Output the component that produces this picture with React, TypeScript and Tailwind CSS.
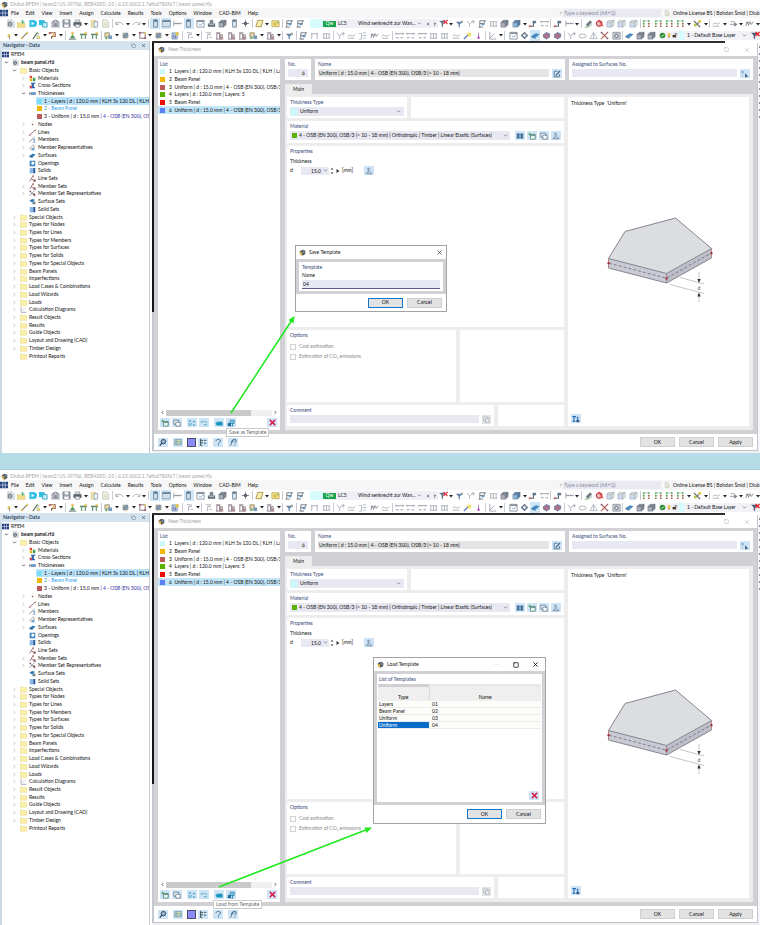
import type { ReactNode } from 'react';
import { ChevronDown, ChevronLeft, ChevronRight, Minus, Square, X } from 'lucide-react';

const G = '#6b7280';
const D = '#3d4653';
const B = '#3f7fb5';
const Y = '#e2b93b';

// 10x10 glyphs shared by the toolbars, the tree and the dialog buttons
const glyphs: Record<string, ReactNode> = {
  app: (
    <>
      <path d="M1 3.5 4.5 1 9 2.5 9 7 5 9.5 1.5 7z" fill="#4b5563" />
      <path d="M1 3.5 4.5 5 5 9.5 1.5 7z" fill="#d9b23c" />
      <path d="M5 3 8 3.6 7.6 6 5.4 5.4z" fill="#7f93ad" />
    </>
  ),
  logo: (
    <>
      <path d="M0 1h10v8H0z" fill="#23407c" />
      <path d="M0 5h10M3.4 1v8M6.5 1v8" stroke="#dfe8f5" strokeWidth=".8" />
    </>
  ),
  newDoc: (
    <>
      <path d="M2 1h5l2 2v6H2z" fill="#eef1f4" stroke="#9ca3af" strokeWidth=".7" />
      <circle cx="4.6" cy="5.5" r="2.3" fill="none" stroke={D} strokeWidth="1" />
      <path d="M2.3 5.5h4.6M4.6 3.3v4.5" stroke={D} strokeWidth=".6" />
    </>
  ),
  open: (
    <>
      <path d="M0 4h3l1 1h5v4.5H0z" fill="#f3d978" stroke="#d3b44b" strokeWidth=".5" />
      <path d="M5 4V1h2v2h2L6 5.5z" fill="#41b06a" />
    </>
  ),
  cyanD: (
    <>
      <path d="M1.5 1H6a4 4 0 0 1 0 8H1.5z" fill="#14b4e0" />
      <path d="m4 3 3 2-3 2z" fill="#fff" />
    </>
  ),
  cyanDoc: (
    <>
      <path d="M0 1h4a3 3 0 0 1 0 6H0z" fill="#14b4e0" />
      <path d="M4 4h5v5H4z" fill="#bfeaf7" stroke="#159bc2" strokeWidth="1" />
    </>
  ),
  box: (
    <>
      <path d="M1 3h8v6H1z" fill="#b7bcc4" stroke={G} strokeWidth=".7" />
      <path d="m2 3 3-2 3 2M3 5.5h4M3 7.2h4" stroke={D} strokeWidth=".9" fill="none" />
    </>
  ),
  save: (
    <>
      <path d="M1 1h8v8H1z" fill="#8b929c" stroke={D} strokeWidth=".6" />
      <path d="M3 1h4v3H3zM2.5 6h5v3h-5z" fill="#f3f4f6" />
    </>
  ),
  print: (
    <>
      <path d="M2.5 1h5v3h-5z" fill="#d7dade" stroke={D} strokeWidth=".5" />
      <path d="M.5 3.6h9v4h-9z" fill={D} />
      <path d="M2.5 6h5v3.2h-5z" fill="#e5e7eb" stroke={D} strokeWidth=".5" />
    </>
  ),
  report: (
    <>
      <path d="M1.5 1.5h5v7.5h-5z" fill="#dfe6c2" stroke={Y} strokeWidth=".8" />
      <path d="M4.5 3h4v6h-4z" fill="#f3f4f6" stroke="#5c7da3" strokeWidth=".8" />
    </>
  ),
  page: (
    <>
      <path d="M2 1h4.5L8.5 3v6H2z" fill="#f7f8f5" stroke="#a5ab9b" strokeWidth=".8" />
      <path d="M3.5 4.4h3.5M3.5 6.4h3.5" stroke="#9cc57a" strokeWidth=".9" />
    </>
  ),
  undo: <path d="M1 3v3h3M1.3 5.6C4 2.6 7 3 9 6.8" fill="none" stroke="#8d939c" strokeWidth="1" />,
  redo: <path d="M9 3v3H6M8.7 5.6C6 2.6 3 3 1 6.8" fill="none" stroke="#a0a5ad" strokeWidth="1" />,
  panel: (
    <>
      <path d="M3 1h4v8H3z" fill="#dbe7f1" stroke="#4a6179" strokeWidth=".9" />
      <path d="M3 1h4v2H3z" fill="#4a6179" />
    </>
  ),
  table: (
    <>
      <path d="M.8 1.5h8.4v7H.8z" fill="#eef4f9" stroke="#5b7894" strokeWidth=".8" />
      <path d="M.8 2.5h8.4" stroke="#4a6179" strokeWidth="1.6" />
      <path d="M1 5.6h8M4 3v5.4M6.6 3v5.4" stroke="#9db2c5" strokeWidth=".5" />
    </>
  ),
  dim: <path d="M1 2v6M1 5h8M9 4v2M3.5 4v2M6 4v2" stroke={G} strokeWidth=".8" fill="none" />,
  window: (
    <>
      <path d="M1 1.5h8v7.5H1z" fill="#fff" stroke={G} strokeWidth=".9" />
      <path d="M1 2.5h8" stroke={G} strokeWidth="1.5" />
      <path d="m3 5 2 2 3-3" stroke={B} strokeWidth=".9" fill="none" />
    </>
  ),
  stamp: (
    <>
      <path d="M3 1h4v4H3z" fill="#6b7480" />
      <path d="M1 5h8v3.6H1z" fill={D} />
      <path d="M2 6.3h6" stroke="#e5e7eb" strokeWidth=".8" />
    </>
  ),
  cube: (
    <>
      <path d="M1 4h5v5H1z" fill="#9aa2ad" stroke={D} strokeWidth=".5" />
      <path d="m1 4 2.5-2.6H9L6 4zM6 4l3-2.6V6.5L6 9z" fill="#6d7783" stroke={D} strokeWidth=".5" />
    </>
  ),
  blueCube: (
    <>
      <path d="M1 4h5v5H1z" fill="#7ba7d6" stroke="#33597f" strokeWidth=".5" />
      <path d="m1 4 2.5-2.6H9L6 4zM6 4l3-2.6V6.5L6 9z" fill="#3d6996" stroke="#33597f" strokeWidth=".5" />
    </>
  ),
  paleCube: (
    <>
      <path d="M1 3.5h5.5V9H1z" fill="#c5d3ea" stroke="#8592ad" strokeWidth=".6" />
      <path d="m1 3.5 2-2h6l-2.5 2zM6.5 3.5 9 1.5V7L6.5 9z" fill="#e3e6d5" stroke="#8592ad" strokeWidth=".6" />
    </>
  ),
  move: (
    <>
      <path d="M5 1v8M1 5h8" stroke={G} strokeWidth="1" />
      <circle cx="5" cy="5" r="2" fill={D} />
    </>
  ),
  slab: <path d="M3 1.5h6L7 8.5H1z" fill="#f6e7a5" stroke="#a08529" strokeWidth="1" />,
  yellowBox: (
    <>
      <path d="M1 2h8v6.5H1z" fill="#f6e27c" stroke="#a08529" strokeWidth=".8" />
      <path d="M3 4h3v3H3z" fill="#d5a41c" />
      <circle cx="7.5" cy="4" r="1" fill="#69a558" />
    </>
  ),
  crane: (
    <>
      <path d="M2 9V2h7M2 5h5V2M.5 9h5" stroke="#56606c" strokeWidth="1" fill="none" />
      <path d="M4 5h3v2H4z" fill={B} />
    </>
  ),
  redFilter: (
    <>
      <path d="M0 2h7L4.5 5v4.5L3 8V5z" fill="#46627f" />
      <path d="m5 1 4.5 4.5M9.5 1 5 5.5" stroke="#e11d24" strokeWidth="1.5" />
    </>
  ),
  filter: (
    <>
      <path d="M1 3h7L5.4 6v3.5L4 8.5V6z" fill="#4b6c92" />
      <path d="M7 1.5 9 3 7.5 5z" fill="#4b5563" />
    </>
  ),
  fork: <path d="M1 2l3 4 3-4M4 6v3M8 1v4M7 3h3" stroke="#9299a4" strokeWidth=".9" fill="none" />,
  truss: <path d="M1 3h8M1 8h8M2 3v5M5 3v5M8 3v5" stroke="#9299a4" strokeWidth=".9" fill="none" />,
  beams: <path d="M1 3h8M1 7.5h3M6 7.5h3M1 2v2M9 2v2" stroke="#7f8792" strokeWidth="1" fill="none" />,
  steps: (
    <>
      <path d="M1 8h5V4h3" stroke={D} strokeWidth="1.2" fill="none" />
      <path d="M5 2h4v2.5H5z" fill="#4a6179" />
      <circle cx="2" cy="8" r="1.1" fill="#c43b31" />
    </>
  ),
  redCircle: (
    <>
      <path d="M1 4 5 2l4 2-3 5H3z" fill="#e1b6b6" />
      <circle cx="4.5" cy="5" r="3" fill="none" stroke="#d01f26" strokeWidth="1.3" />
      <path d="M4 1l5 7" stroke="#d01f26" strokeWidth="1.2" />
    </>
  ),
  rotate: (
    <>
      <path d="M2 6 7 1.5 9 4 4 8.5z" fill="#5d6874" />
      <path d="M1 9c3 .5 6-1 7.5-3" stroke="#56a04d" strokeWidth="1" fill="none" />
    </>
  ),
  dots: (
    <>
      <path d="M2 2v6M7.5 3v5M2 2h5" stroke="#6e9d63" strokeWidth=".6" fill="none" />
      <path d="M1 1.5h2v1.6H1zM6.5 1.5h2v1.6h-2zM1 4.5h2V6H1z" fill="#2f9e44" />
      <path d="M6.5 4.5h2V6h-2zM1 7.5h2V9H1zM6.5 7.5h2V9h-2z" fill="#b04a2f" />
    </>
  ),
  greenYellow: (
    <>
      <path d="m1 2 7 7M8 2 2 8" stroke={D} strokeWidth="1.2" />
      <path d="M1 5h3v3H1z" fill="#a9c52f" />
      <path d="M6 1h3v3H6z" fill={Y} />
    </>
  ),
  curve: <path d="M1 6c2-4 4 2 8-2M1 8h7" stroke="#8f96a1" strokeWidth=".9" fill="none" />,
  arrows: <path d="M1 6h6M6 4l3 2-3 2zM2 3h4" stroke="#687280" strokeWidth=".8" fill="#687280" />,
  hist: <path d="M1 8l1.5-5L4 7l1.5-4L7 6l2-3M1 4h3" stroke="#5b6470" strokeWidth=".9" fill="none" />,
  node: (
    <>
      <circle cx="5.5" cy="5" r="1.7" fill={Y} />
      <path d="M6 6v3" stroke={D} strokeWidth=".8" />
    </>
  ),
  yellowLine: (
    <>
      <path d="M1.5 8.5 8.5 1.5" stroke="#6b6b4a" strokeWidth="1.3" />
      <circle cx="2" cy="8" r="1.2" fill={Y} />
      <circle cx="8" cy="2" r="1.2" fill={Y} />
    </>
  ),
  members: (
    <>
      <path d="M1 9 6 1.5" stroke="#4d5a44" strokeWidth="1.3" />
      <path d="M5 3h3M5 5.5h3M5 8h4" stroke="#76975a" strokeWidth="1" />
      <circle cx="8" cy="7.5" r="1.3" fill={Y} />
    </>
  ),
  flag: (
    <>
      <path d="M1 2h7v4H4v3" stroke="#7a4545" strokeWidth="1.2" fill="none" />
      <path d="m5 1 3 3-2 3z" fill={Y} />
      <circle cx="2" cy="2.5" r="1.2" fill="#c43b31" />
    </>
  ),
  support: (
    <>
      <circle cx="5" cy="2.5" r="1.6" fill={Y} />
      <path d="M5 3.5 8 8H2z" fill="#3a8d4c" />
      <path d="M1 9h8" stroke={D} strokeWidth="1" />
    </>
  ),
  green2: (
    <>
      <path d="M1 3h8v1.6H1z" fill="#38784a" />
      <path d="M3 4v5M7 4v5" stroke="#38784a" strokeWidth="1.2" />
      <circle cx="7.5" cy="2.5" r="1.3" fill={Y} />
    </>
  ),
  loadBox: (
    <>
      <path d="M1 2h5v5H1z" fill="#d6cfa0" stroke="#776c3a" strokeWidth=".8" />
      <path d="M5 5h4v4H5z" fill="#5f89b2" />
      <circle cx="2.5" cy="8" r="1.2" fill="#3f9c50" />
    </>
  ),
  frame: (
    <>
      <path d="M2 2h6v6H2z" fill="none" stroke="#6b4b57" strokeWidth="1" />
      <path d="M1 1h2v2H1zM7 7h2v2H7z" fill="#8c3d4c" />
      <circle cx="8" cy="2" r="1.2" fill={Y} />
    </>
  ),
  profile: (
    <>
      <path d="M2 2h6v6H2z" fill="#5f7fa8" />
      <path d="M1 6 6 1.5M4 9l5-4" stroke="#c9a53a" strokeWidth="1" />
    </>
  ),
  gear: (
    <>
      <path d="M1 2h6v7H1z" fill="#a9bdd6" stroke="#53779e" strokeWidth=".7" />
      <circle cx="7" cy="3" r="2" fill={Y} />
      <path d="M3 4v4M5 5v3" stroke="#2d5580" strokeWidth=".8" />
    </>
  ),
  hook: <path d="M2 2h5v2H4v5M6 7h3" stroke="#98a0aa" strokeWidth="1" fill="none" />,
  bars: (
    <>
      <path d="M1 9h8M2 9V3h3v6M6 9V4h2v5M1 2h5" stroke="#7a6a78" strokeWidth="1" fill="none" />
      <path d="M6 6h3v3H6z" fill="#ad7b80" />
    </>
  ),
  gray: <path d="M1 3h3v6H1M5 2h4M5 5h4M6 8h3" stroke="#979ea8" strokeWidth=".9" fill="none" />,
  portal: <path d="M2 9V3h6v6M.8 3h2M7 3h2" stroke="#98a0aa" strokeWidth="1" fill="none" />,
  target: (
    <>
      <path d="M5 .8 9.2 5 5 9.2.8 5z" fill="#51617a" />
      <circle cx="5" cy="5" r="1.6" fill="#e5e7eb" />
    </>
  ),
  surf: (
    <>
      <path d="m.5 5.5 5-3 4 1-4.5 4z" fill="#2b78b8" />
      <path d="m.5 5.5 4.5 2v1.2L.5 7z" fill="#1c4f7c" />
    </>
  ),
  magenta: (
    <>
      <path d="m1 4 4-3 4 2v4L5 9.5 1 7z" fill="#6d6d93" />
      <path d="M3 4h4v3H3z" fill="#c24b64" />
    </>
  ),
  wand: (
    <>
      <path d="M1 9 6 4" stroke="#4f6db4" strokeWidth="1.6" />
      <path d="M4 2h5v4H6z" fill="#f2dc54" />
    </>
  ),
  pin: (
    <>
      <path d="M5 2v5" stroke="#a06aa8" strokeWidth="1" />
      <circle cx="5" cy="7.5" r="1.4" fill="#b02bc4" />
    </>
  ),
  axes: <path d="M2 1v8h7M2 8l5-5" stroke="#7f8792" strokeWidth=".9" fill="none" />,
  ellipse: <ellipse cx="5" cy="5.5" rx="4" ry="2.2" fill="none" stroke="#9aa2ad" strokeWidth="1" />,
  tri: <path d="M5 1.5 9 8.5H1zM5 2v6" fill="none" stroke="#9aa2ad" strokeWidth=".9" />,
  redX: (
    <>
      <path d="m1 1 8 8M9 1 1 9" stroke="#a4403d" strokeWidth="1.3" />
      <path d="M1 1h1.5v1.5H1zM7.5 7.5H9V9H7.5z" fill={D} />
    </>
  ),
  camera: (
    <>
      <path d="M1 1.5h8v7.5H1z" fill="#d5d8dd" stroke={G} strokeWidth=".9" />
      <circle cx="5" cy="5.3" r="2" fill="none" stroke={D} strokeWidth="1" />
    </>
  ),
  check: (
    <>
      <circle cx="5" cy="5" r="4" fill="#2c8f36" />
      <path d="m3 5 1.5 1.5L7.200 3.5" stroke="#fff" strokeWidth="1" fill="none" />
    </>
  ),
  bulb: (
    <>
      <circle cx="5" cy="4" r="2.5" fill="#f1c232" />
      <path d="M4 6.5h2V9H4z" fill="#7c5d12" />
    </>
  ),
  lock: (
    <>
      <path d="M1 5h6v4H1z" fill="#4b3a2a" />
      <path d="M5 5V2.5h3V5" fill="none" stroke={D} strokeWidth="1" />
    </>
  ),
  folder: <path d="M.5 1.5H4l.8 1h4.7V9H.5z" fill="#fbf0a8" stroke="#e2ce6c" strokeWidth=".6" />,
  material: (
    <>
      <path d="M1 1h3.5v3.5H1z" fill="#e24b3b" />
      <path d="M1 5h3.5v4H1z" fill="#f0b429" />
      <path d="M5.500 4H9v5H5.500z" fill="#3e9e57" />
    </>
  ),
  section: (
    <>
      <path d="M3 1h6v1.800H7V7h1.500v2H2.500V7H4V2.800H3z" fill="#3663b0" />
      <path d="M1 5h3v4H1z" fill="#c7494d" />
    </>
  ),
  thick: (
    <>
      <path d="M1 3v4M1 5h2" stroke={D} strokeWidth=".8" />
      <path d="M3 3.5h6.5v3.2H3z" fill="#62a0cf" stroke="#36638a" strokeWidth=".5" />
    </>
  ),
  nodeDot: <circle cx="5" cy="5" r="1.1" fill="#8b4040" />,
  line: (
    <>
      <path d="M1 8.5 9 1.5" stroke="#7a4a4a" strokeWidth="1" />
      <path d="M.5 8H2v1.5H.5zM8.200 1h1.500v1.500H8.200z" fill="#a83232" />
    </>
  ),
  member: (
    <>
      <path d="M.5 8.5 8 1.5" stroke="#63707f" strokeWidth="1.1" />
      <path d="M6 5h3M7.5 5v4M6 9h3" stroke="#3d77b5" strokeWidth=".9" />
    </>
  ),
  memberRep: (
    <>
      <path d="M.5 7 7 1M2.5 9 9 3" stroke="#63707f" strokeWidth="1" />
      <path d="M4 6h4v3H4z" fill="#6da2d6" />
    </>
  ),
  opening: (
    <>
      <path d="M1 1h8v8H1z" fill="#3f80bf" />
      <path d="M3.5 2.5h4v4h-4z" fill="#fff" />
    </>
  ),
  solid: (
    <>
      <path d="M1 1.5h5V9H1z" fill="#8bb8e4" />
      <path d="M6 1.5h3V9H6z" fill="#2a5fa3" />
    </>
  ),
  lineSet: (
    <>
      <path d="M1 9 6 1M3 5l6 4" stroke="#7a4a4a" strokeWidth="1" fill="none" />
      <circle cx="6" cy="1.5" r="1" fill="#a83232" />
      <path d="M6.5 6.5h3v3h-3z" fill="#8b4a54" />
    </>
  ),
  crossSet: (
    <>
      <path d="M1 2l8 7M1 8l7-7" stroke="#5d6874" strokeWidth="1" fill="none" />
      <path d="M6 5h3v3H6zM1 1h2v2H1z" fill="#8b4a54" />
    </>
  ),
  surfSet: (
    <>
      <path d="m.5 4 4-2.5 4 1-4 4z" fill="#2b78b8" />
      <path d="M5 5h4v4H5z" fill="#6a7f96" />
    </>
  ),
  calc: <path d="M1.5 1v8H9M4 5h1M6.5 4h1" stroke="#6b7280" strokeWidth=".8" fill="none" />,
  book: (
    <>
      <path d="M1 2h3.5v6H1zM5.500 2H9v6H5.500z" fill="#35658f" />
      <path d="M1.5 5H4M6 5h2.5" stroke="#fff" strokeWidth=".5" />
    </>
  ),
  newItem: (
    <>
      <path d="M3 3h6v6H3z" fill="#e9f3f1" stroke="#41756a" strokeWidth=".9" />
      <path d="M3 4h6" stroke="#41756a" strokeWidth="1.2" />
      <path d="M.5 2.5h3M2 1v3" stroke="#3d9c4d" strokeWidth="1" />
    </>
  ),
  copyItem: (
    <>
      <path d="M1 1.5h6v5H1z" fill="#fff" stroke="#4d6780" strokeWidth=".9" />
      <path d="M3.5 4H9v5H3.500z" fill="#fff" stroke="#4d6780" strokeWidth=".9" />
    </>
  ),
  tree: (
    <>
      <path d="M4 1.5v7M4 5h3M4 8.5h3.5" stroke="#60768c" strokeWidth=".8" fill="none" />
      <path d="M3 .8h3v2.500H3zM1 6.500h2.500V9H1zM6.500 6.500H9V9H6.500z" fill="#8aa2b8" />
    </>
  ),
  edit: (
    <>
      <path d="M1.5 1.5H6M1.5 1.5v7H8V5" stroke="#35587a" strokeWidth=".9" fill="none" />
      <path d="M3.5 7 8.8 1.2" stroke="#35587a" strokeWidth="1.3" />
    </>
  ),
  pick: (
    <>
      <path d="m5 4 4 4.5H6.800L5.500 10z" fill="#2d4a6a" />
      <path d="M1 1.5h2v2H1z" fill="#4e7ba7" />
      <path d="M2 4.5V8" stroke="#8aa4be" strokeWidth=".7" />
    </>
  ),
  checks: <path d="M1 2.5h3M1 7.5h3M6 3.5h3M6 7.5h3M4 5.5l1 1M1 4.5l1 1" stroke="#2c93ae" strokeWidth="1.3" fill="none" />,
  checks2: <path d="M.5 3 2 4.500 4 2M5 4l1.500-1.500L9 5M4.500 8 6 6.500 9 8" stroke="#3fa0a8" strokeWidth="1.1" fill="none" />,
  load: <path d="M.5 5.5 4 2.500v1.500c2-1.500 4.500-1.200 5.500.500V8H2.500z" fill="#1795bd" />,
  saveTpl: (
    <>
      <path d="M1 5h4v4H1z" fill="#1d6fa3" />
      <path d="M4 1.5h5v4H4z" fill="#7cc6e0" stroke="#1d6fa3" strokeWidth=".8" />
      <path d="M7 5.5V9H5.5" stroke="#1d6fa3" strokeWidth="1" fill="none" />
    </>
  ),
  search: (
    <>
      <circle cx="5.5" cy="4.5" r="2.8" fill="#9ab7cf" stroke="#27445f" strokeWidth="1.2" />
      <path d="M3.5 6.5 1 9.5" stroke="#27445f" strokeWidth="1.5" />
    </>
  ),
  units: (
    <>
      <path d="M1 2h8v6.5H1z" fill="#d8e4b8" stroke="#5a86a8" strokeWidth=".8" />
      <path d="M1 4.5h8M1 6.5h8M3.5 2v6.5" stroke="#5a86a8" strokeWidth=".6" />
    </>
  ),
  branch: <path d="M2 1v8M2 3h3M2 6h3M6 3h3M6 6.5h3M1 9h3" stroke="#2f4a4a" strokeWidth="1.1" fill="none" />,
  help: <path d="M2.5 4C2.500 1 8 1 8 4c0 1.500-2.500 1.500-2.500 3M5.500 8v1.300" stroke="#3c6a8e" strokeWidth="1.2" fill="none" />,
  fx: <path d="M1.5 9C4 9 3 1.500 6 1.500M2.500 4.500h3M6 3.500C6 1 9.500 1 9 3.500 8.500 5 7.500 5 7.500 6.500M7.500 8v1.200" stroke="#24506f" strokeWidth="1" fill="none" />,
  views: (
    <>
      <path d="M.5 2H5M2.5 2v6M1 8h3" stroke="#2a6db0" strokeWidth="1.4" fill="none" />
      <path d="M7 2v6M5.5 3.5h3" stroke="#2a6db0" strokeWidth="1" />
      <path d="M5.5 6H9v3H5.500z" fill="#24568c" />
    </>
  ),
};

function Glyph({ name, className = 'size-[9px]' }: { name: string; className?: string }) {
  return (
    <svg viewBox="0 0 10 10" className={`${className} shrink-0`} aria-hidden="true">
      {glyphs[name]}
    </svg>
  );
}

// "|" separator, "v" menu arrow, "*name" pressed button
const bar1a = 'newDoc open cyanD cyanDoc box save print v report page | undo v redo v | *panel *table dim *panel window stamp cube panel move | slab v yellowBox | crane crane'.split(' ');
const bar1b = 'redFilter v filter fork crane truss cube blueCube v steps beams | steps dim v | rotate redCircle paleCube paleCube paleCube | dots dots dots dots v greenYellow v | curve v arrows v hist v'.split(' ');
const bar2a = 'node v yellowLine members v flag v | support green2 green2 | loadBox v profile v frame v profile v gear | hook v | hook bars bars bars loadBox v bars v | filter | crane portal truss | fork curve gray hist curve | beams beams beams truss truss curve wand pin | axes v |'.split(' ');
const bar2b = 'window target *surf magenta magenta | fork ellipse tri redX camera | surf cube cube'.split(' ');

function ToolbarItems({ items }: { items: string[] }) {
  return (
    <>
      {items.map((item, index) => {
        if (item === '|') return <span key={index} className="h-[9px] w-px bg-[#c9ccd2]" />;
        if (item === 'v')
          return (
            <svg key={index} viewBox="0 0 4 4" className="size-[4px]" aria-hidden="true">
              <path d="M0 1h4L2 3.5z" fill="#222" />
            </svg>
          );
        const pressed = item.startsWith('*');
        const name = pressed ? item.slice(1) : item;
        return (
          <button
            key={index}
            type="button"
            aria-label={name}
            className={`flex h-[11px] w-[10px] items-center justify-center ${pressed ? 'bg-[#cfe6f7]' : ''}`}
          >
            <Glyph name={name} className="size-[9px] opacity-85" />
          </button>
        );
      })}
    </>
  );
}

const menus = ['File', 'Edit', 'View', 'Insert', 'Assign', 'Calculate', 'Results', 'Tools', 'Options', 'Window', 'CAD-BIM', 'Help'];

function WindowHeader() {
  return (
    <header className="bg-[#f6f6f7]">
      <div className="flex h-[8px] items-center gap-[2px] bg-white px-px text-[#a9a3a3]">
        <Glyph name="app" className="size-[7px]" />
        Dlubal RFEM | team2/US-29706_REBASED_02 | 6.13.0002.1.7ef6d780f67 | beam panel.rf6
      </div>
      <div className="flex h-[10px] items-center">
        <Glyph name="logo" className="size-[8px]" />
        <nav className="flex flex-1 gap-[7px] pl-[3px]">
          {menus.map((menu) => (
            <button key={menu} type="button">
              {menu}
            </button>
          ))}
        </nav>
        <ChevronRight className="size-[4px]" />
        <input
          aria-label="Keyword search"
          placeholder="Type a keyword (Alt+Q)"
          className="mr-[3px] h-[8px] w-[98px] bg-[#e9e9f3] px-px placeholder:text-[#8b8b98]"
        />
        <Glyph name="page" className="size-[6px]" />
        <span className="ml-[3px] w-[87px] overflow-hidden">Online License BS | Bohdan Šmíd | Dlub</span>
      </div>
      <div className="flex h-[11px] items-center bg-white">
        <div className="flex w-[306px] items-center justify-between pl-[5px]">
          <ToolbarItems items={bar1a} />
        </div>
        <div className="ml-[4px] flex h-[9px] w-[128px] items-center bg-[#efeff5]">
          <span className="h-full w-[13px] bg-[#d5fbfd]" />
          <span className="flex h-[6px] w-[13px] items-center justify-center bg-[#17a34a] text-white">Qw</span>
          <span className="w-[22px] pl-[2px]">LC5</span>
          <span className="flex-1">Wind senkrecht zur Wan...</span>
          <ChevronDown className="size-[5px]" />
          <ChevronLeft className="ml-[4px] size-[4px]" strokeWidth={5} />
          <ChevronRight className="mr-px ml-[3px] size-[4px]" strokeWidth={5} />
        </div>
        <div className="flex flex-1 items-center justify-between">
          <ToolbarItems items={bar1b} />
        </div>
      </div>
      <div className="flex h-[12px] items-center bg-white">
        <div className="flex w-[506px] items-center justify-between pl-[3px]">
          <ToolbarItems items={bar2a} />
        </div>
        <div className="flex flex-1 items-center justify-between pl-[2px]">
          <ToolbarItems items={bar2b} />
        </div>
        <div className="ml-[2px] flex h-[9px] w-[101px] items-center bg-[#f3f3f7]">
          <Glyph name="check" className="size-[7px]" />
          <Glyph name="bulb" className="size-[6px]" />
          <Glyph name="lock" className="size-[6px]" />
          <span className="mr-[3px] ml-px h-full w-[5px] bg-[#d5fbfd]" />
          <span className="flex-1">1 - Default Base Layer</span>
          <ChevronDown className="mr-[4px] size-[5px]" />
          <Glyph name="redFilter" />
        </div>
      </div>
    </header>
  );
}

type Row = { label: ReactNode; icon?: string; swatch?: string; level: number; open?: boolean; leaf?: boolean; className?: string };

const tree: Row[] = [
  { label: 'RFEM', icon: 'logo', level: 0, leaf: true },
  { label: 'beam panel.rf6', icon: 'newDoc', level: 1, open: true, className: 'font-bold' },
  { label: 'Basic Objects', icon: 'folder', level: 2, open: true },
  { label: 'Materials', icon: 'material', level: 3 },
  { label: 'Cross-Sections', icon: 'section', level: 3 },
  { label: 'Thicknesses', icon: 'thick', level: 3, open: true },
  { label: '1 - Layers | d : 120.0 mm | KLH 5s 120 DL | KLH | La', swatch: 'bg-[#7fdcf7]', level: 4, leaf: true, className: 'bg-[#b9e2fb]' },
  { label: '2 - Beam Panel', swatch: 'bg-[#f2b705]', level: 4, leaf: true, className: 'text-[#2b9af3]' },
  {
    label: (
      <>
        3 - Uniform | d : 15.0 mm <span className="text-[#32329b]">| 4 - OSB (EN 300), OSB,</span>
      </>
    ),
    swatch: 'bg-[#b95b5b]',
    level: 4,
    leaf: true,
  },
  { label: 'Nodes', icon: 'nodeDot', level: 3 },
  { label: 'Lines', icon: 'line', level: 3 },
  { label: 'Members', icon: 'member', level: 3 },
  { label: 'Member Representatives', icon: 'memberRep', level: 3 },
  { label: 'Surfaces', icon: 'surf', level: 3 },
  { label: 'Openings', icon: 'opening', level: 3, leaf: true },
  { label: 'Solids', icon: 'solid', level: 3, leaf: true },
  { label: 'Line Sets', icon: 'lineSet', level: 3, leaf: true },
  { label: 'Member Sets', icon: 'lineSet', level: 3 },
  { label: 'Member Set Representatives', icon: 'crossSet', level: 3 },
  { label: 'Surface Sets', icon: 'surfSet', level: 3, leaf: true },
  { label: 'Solid Sets', icon: 'solid', level: 3, leaf: true },
  { label: 'Special Objects', icon: 'folder', level: 2 },
  { label: 'Types for Nodes', icon: 'folder', level: 2 },
  { label: 'Types for Lines', icon: 'folder', level: 2 },
  { label: 'Types for Members', icon: 'folder', level: 2 },
  { label: 'Types for Surfaces', icon: 'folder', level: 2 },
  { label: 'Types for Solids', icon: 'folder', level: 2 },
  { label: 'Types for Special Objects', icon: 'folder', level: 2 },
  { label: 'Beam Panels', icon: 'folder', level: 2 },
  { label: 'Imperfections', icon: 'folder', level: 2 },
  { label: 'Load Cases & Combinations', icon: 'folder', level: 2 },
  { label: 'Load Wizards', icon: 'folder', level: 2 },
  { label: 'Loads', icon: 'folder', level: 2 },
  { label: 'Calculation Diagrams', icon: 'calc', level: 2 },
  { label: 'Result Objects', icon: 'folder', level: 2 },
  { label: 'Results', icon: 'folder', level: 2 },
  { label: 'Guide Objects', icon: 'folder', level: 2 },
  { label: 'Layout and Drawing (CAD)', icon: 'folder', level: 2 },
  { label: 'Timber Design', icon: 'folder', level: 2 },
  { label: 'Printout Reports', icon: 'folder', level: 2, leaf: true },
];

const indents = ['ml-0', 'ml-[2px]', 'ml-[10px]', 'ml-[19px]', 'ml-[34px]'];

function Navigator() {
  return (
    <aside className="flex w-[150px] shrink-0 flex-col border-r border-[#c5c9d3] bg-white">
      <div className="flex h-[9px] items-center bg-[#d5e3ef] px-[3px] font-bold text-[#33475f]">
        <span className="flex-1">Navigator - Data</span>
        <Glyph name="copyItem" className="mr-[5px] size-[5px]" />
        <X className="size-[5px]" strokeWidth={3} />
      </div>
      <div className="flex-1 border-l-2 border-[#cbd9e0] pt-px">
        <ul className="grid h-[309px] auto-rows-fr overflow-hidden">
          {tree.map((row, index) => (
            <li
              key={index}
              className={`${indents[row.level]} ${row.className ?? ''} flex min-h-0 min-w-0 items-center`}
            >
              {!row.leaf &&
                (row.open ? (
                  <ChevronDown className="size-[5px] shrink-0" strokeWidth={3} />
                ) : (
                  <ChevronRight className="size-[5px] shrink-0 text-[#777]" />
                ))}
              {row.swatch ? (
                <span className={`ml-px size-[5px] shrink-0 ${row.swatch}`} />
              ) : (
                <Glyph
                  name={row.icon ?? 'folder'}
                  className={row.level === 0 ? 'size-[7px]' : row.leaf ? 'ml-[8px] size-[7px]' : 'ml-[3px] size-[7px]'}
                />
              )}
              <span className="ml-[2px] whitespace-pre">{row.label}</span>
            </li>
          ))}
        </ul>
      </div>
    </aside>
  );
}

function IconButton({ name, label, className = '' }: { name: string; label: string; className?: string }) {
  return (
    <button
      type="button"
      aria-label={label}
      className={`flex h-[9px] w-[10px] shrink-0 items-center justify-center bg-[#cfe5f7] ${className}`}
    >
      {name === 'delete' ? (
        <X className="size-[9px] text-[#d6103c]" strokeWidth={4} />
      ) : (
        <Glyph name={name} className="size-[8px]" />
      )}
    </button>
  );
}

function Button({ children, primary }: { children: string; primary?: boolean }) {
  return (
    <button
      type="button"
      className={`flex h-[10px] w-[35px] items-center justify-center bg-[#e2e2e2] ${
        primary ? 'border border-[#1177cc]' : 'border border-[#cfcfcf]'
      }`}
    >
      {children}
    </button>
  );
}

function Box({ title, children, className = '' }: { title?: string; children?: ReactNode; className?: string }) {
  return (
    <section className={`bg-white px-[3px] pt-px ${className}`}>
      {title && <h3 className="h-[9px] leading-[8px] font-medium text-[#46567f]">{title}</h3>}
      {children}
    </section>
  );
}

const thicknesses = [
  { color: 'bg-[#c9f9fd]', label: '1  Layers | d : 120.0 mm | KLH 5s 120 DL | KLH | Layer' },
  { color: 'bg-[#f2b705]', label: '2  Beam Panel' },
  { color: 'bg-[#b95b5b]', label: '3  Uniform | d : 15.0 mm | 4 - OSB (EN 300), OSB/3 (' },
  { color: 'bg-[#5cb000]', label: '4  Layers | d : 120.0 mm | Layers: 5' },
  { color: 'bg-[#f00a0a]', label: '5  Beam Panel' },
  { color: 'bg-[#5b7ff5]', label: '6  Uniform | d : 15.0 mm | 4 - OSB (EN 300), OSB/3 (' },
];

function ThicknessList() {
  return (
    <section className="flex w-[122px] shrink-0 flex-col bg-white">
      <h3 className="mt-px h-[8px] pl-[2px] leading-[8px] font-medium text-[#46567f]">List</h3>
      <ul className="grid h-[46px] auto-rows-fr overflow-hidden">
        {thicknesses.map((item, index) => (
          <li
            key={item.label}
            className={`flex min-h-0 min-w-0 items-center gap-[4px] pl-[2px] ${index === 5 ? 'bg-[#c3e5f9]' : ''}`}
          >
            <span className={`size-[5px] shrink-0 ${item.color}`} />
            <span className="whitespace-pre">{item.label}</span>
          </li>
        ))}
      </ul>
      <div className="mx-[2px] mt-auto flex h-[7px] items-center">
        <ChevronLeft className="size-[5px]" strokeWidth={3} />
        <div className="mx-px h-[6px] flex-1 bg-[#f0f0f0]">
          <div className="h-full w-4/5 bg-[#c9c9c9]" />
        </div>
        <ChevronRight className="size-[5px]" strokeWidth={3} />
      </div>
      <div className="flex h-[14px] items-start gap-[2px] px-[2px] pt-[2px]">
        <IconButton name="newItem" label="New" />
        <IconButton name="copyItem" label="Copy" />
        <IconButton name="checks" label="Select all" className="ml-[3px]" />
        <IconButton name="checks2" label="Invert selection" />
        <IconButton name="load" label="Load from Template" className="ml-[3px]" />
        <IconButton name="saveTpl" label="Save as Template" />
        <IconButton name="delete" label="Delete" className="mr-px ml-auto" />
      </div>
    </section>
  );
}

function SlabDiagram() {
  return (
    <svg viewBox="600 212 118 95" className="mx-auto mt-[106px] h-[95px] w-[118px]" aria-label="Uniform thickness">
      <path d="M608.500 257.500 625 230.500 675.500 217 711.500 247.500 666.500 272.500z" fill="#dcdde1" />
      <path d="M608.500 257.500 666.500 272.500V282L608.500 267z" fill="#c9cad3" />
      <path d="M666.500 272.500 711.500 247.500V257L666.500 282z" fill="#bdbec8" />
      <path
        d="M608.500 257.500 625 230.500 675.500 217 711.500 247.500V257L666.500 282 608.500 267zL666.500 272.500 711.500 247.500M666.500 272.500V282"
        fill="none"
        stroke="#85868f"
        strokeWidth="1"
      />
      <path d="M609 262.200 666.500 277.200 711 252.200" fill="none" stroke="#6a6b78" strokeWidth=".8" strokeDasharray="3 2" />
      <path d="M608.500 257v10M666.500 273v9M711.500 248v9" stroke="#c98a8f" strokeWidth=".6" />
      <path d="M607.500 261.200h2v2h-2zM710.500 251.200h2v2h-2zM665.500 276.500h2v2h-2z" fill="#a3202a" />
      <path d="M680 276.500 704 283M670 283.500 704 292.500M699 271v9M699 293v8" stroke="#a0a0a6" strokeWidth=".6" fill="none" />
      <path d="M697.300 278h3.400l-1.700 4zM697.300 295.500h3.400l-1.700-4z" fill="#333" />
      <text x="697.500" y="289" fontSize="5" fill="#555">
        d
      </text>
    </svg>
  );
}

const field = 'h-[8px] bg-[#e8e8f2] px-[3px]';

function ThicknessForm() {
  return (
    <div className="flex min-w-0 flex-1 flex-col">
      <div className="flex gap-[4px]">
        <Box title="No." className="w-[26px] pb-[2px]">
          <input aria-label="No." readOnly value="6" className={`${field} block w-full text-right`} />
        </Box>
        <Box title="Name" className="min-w-0 flex-1 pb-[2px]">
          <div className="flex gap-[3px]">
            <input
              aria-label="Name"
              readOnly
              value="Uniform | d : 15.0 mm | 4 - OSB (EN 300), OSB/3 (> 10 - 18 mm)"
              className="h-[8px] min-w-0 flex-1 bg-[#e4e4e4] px-px"
            />
            <IconButton name="edit" label="Edit name" />
          </div>
        </Box>
        <Box title="Assigned to Surfaces No." className="w-[184px] pb-[2px]">
          <div className="flex gap-[3px]">
            <input aria-label="Assigned to Surfaces No." className={`${field} min-w-0 flex-1`} />
            <IconButton name="pick" label="Select surfaces" />
          </div>
        </Box>
      </div>
      <div className="mt-[4px] flex" role="tablist">
        <button type="button" role="tab" aria-selected="true" className="h-[10px] w-[27px] bg-[#ededee]">
          Main
        </button>
      </div>
      <div className="flex flex-1 gap-[4px] bg-[#ededee] pt-[3px] pr-[4px] pb-[4px] pl-[2px]">
        <div className="flex min-w-0 flex-1 flex-col gap-[3px]">
          <div className="flex gap-[4px]">
            <Box title="Thickness Type" className="w-[120px] pb-[2px]">
              <div className="relative flex items-center bg-[#e8e8f2]">
                <span className="ml-px h-[8px] w-[6px] bg-[#cdf6fb]" />
                <select aria-label="Thickness Type" className="h-[9px] flex-1 appearance-none pl-[3px]">
                  <option>Uniform</option>
                </select>
                <ChevronDown className="absolute right-[3px] size-[5px]" />
              </div>
            </Box>
            <Box className="flex-1" />
          </div>
          <Box title="Material" className="pb-[3px]">
            <div className="flex items-center gap-[2px]">
              <div className="relative mr-[3px] flex min-w-0 flex-1 items-center bg-[#e8e8f2]">
                <span className="ml-[2px] size-[5px] bg-[#5cb000]" />
                <select aria-label="Material" className="h-[9px] min-w-0 flex-1 appearance-none pl-[2px]">
                  <option>4 - OSB (EN 300), OSB/3 (&gt; 10 - 18 mm) | Orthotropic | Timber | Linear Elastic (Surfaces)</option>
                </select>
                <ChevronDown className="absolute right-[2px] size-[5px]" />
              </div>
              <IconButton name="book" label="Material library" />
              <IconButton name="newItem" label="New material" />
              <IconButton name="copyItem" label="Edit material" />
              <IconButton name="tree" label="Material details" />
            </div>
          </Box>
          <Box title="Properties" className="flex-1">
            <div className="mt-[2px] h-[8px]">Thickness</div>
            <div className="flex h-[9px] items-center">
              <label className="flex items-center">
                <span className="w-[11px]">d</span>
                <input readOnly value="15.0" className="h-[8px] w-[21px] bg-[#e8e8f2] px-px text-right" />
              </label>
              <span className="flex h-[8px] items-center bg-[#e8e8f2] px-px">
                <ChevronDown className="size-[5px]" />
              </span>
              <svg viewBox="0 0 12 8" className="h-[8px] w-[12px]" aria-hidden="true">
                <path d="M1.5 2.5 3 1l1.500 1.500zM1.500 5.500 3 7l1.500-1.500zM7.500 2l3 2-3 2z" fill="#333" />
              </svg>
              <span className="ml-px w-[22px]">[mm]</span>
              <IconButton name="tree" label="Thickness parameters" />
            </div>
          </Box>
          <div className="flex gap-[4px]">
            <Box title="Options" className="min-h-[72px] flex-[171]">
              {['Cost estimation', 'Estimation of CO₂ emissions'].map((option) => (
                <label key={option} className="mt-[3px] flex h-[7px] items-center gap-[3px] text-[#8a8a8a]">
                  <input type="checkbox" disabled className="size-[6px] appearance-none border border-[#d0d0d0] bg-white" />
                  {option}
                </label>
              ))}
            </Box>
            <Box className="flex-[102]" />
          </div>
          <div className="flex gap-[4px]">
            <Box title="Comment" className="flex-[210] pb-[2px]">
              <div className="flex gap-[3px]">
                <input aria-label="Comment" className={`${field} min-w-0 flex-1`} />
                <button type="button" aria-label="Comment templates" className="flex h-[9px] w-[9px] items-center justify-center bg-[#e3e3e3]">
                  <Glyph name="copyItem" className="size-[7px] opacity-50" />
                </button>
              </div>
            </Box>
            <Box className="flex-[63]" />
          </div>
        </div>
        <section className="flex w-[181px] shrink-0 flex-col bg-white p-[3px]">
          <p className="h-[7px]">Thickness Type &nbsp;'Uniform'</p>
          <SlabDiagram />
          <IconButton name="views" label="Views" className="mt-auto" />
        </section>
      </div>
    </div>
  );
}

function ThicknessDialog() {
  return (
    <div className="flex min-w-0 flex-1 flex-col border-b border-[#c4c4c4] bg-white">
      <div className="flex h-[13px] items-center pr-[7px] pl-[4px] text-[#a3a3a3]">
        <Glyph name="app" className="mr-[3px] size-[7px]" />
        <h2 className="flex-1">New Thickness</h2>
        <Square className="mr-[15px] size-[5px]" />
        <X className="size-[6px]" />
      </div>
      <div className="flex flex-1 gap-[5px] bg-[#d1d1d5] pt-[3px] pr-[4px] pb-[4px] pl-[4px]">
        <ThicknessList />
        <ThicknessForm />
      </div>
      <div className="flex h-[16px] items-center gap-[2px] px-[4px]">
        <IconButton name="search" label="Find" />
        <IconButton name="units" label="Units" className="ml-[3px]" />
        <button type="button" aria-label="Color" className="ml-[2px] size-[9px] border border-[#4a4a6b] bg-[#8a8af8]" />
        <IconButton name="branch" label="Structure" />
        <IconButton name="help" label="Help" className="ml-[3px]" />
        <IconButton name="fx" label="Formulas" className="ml-[3px]" />
        <div className="ml-auto flex gap-[4px]">
          <Button>OK</Button>
          <Button>Cancel</Button>
          <Button>Apply</Button>
        </div>
      </div>
    </div>
  );
}

function Screen({ children }: { children: ReactNode }) {
  return (
    <section className="relative flex min-h-[453px] flex-col overflow-hidden bg-white">
      <WindowHeader />
      <div className="flex flex-1">
        <Navigator />
        <div className="ml-[2px] flex min-w-0 flex-1 flex-col">
          <div className="mr-[35px] h-[2px] bg-[#2e2e30]" />
          <div className="flex flex-1">
            <div className="w-[2px] bg-[#c4c6d2]">
              <div className="h-[269px] bg-[#161618]" />
            </div>
            <ThicknessDialog />
            <div className="flex w-[3px] flex-col items-end gap-[5px] border-l border-[#c5c7ce] bg-[#f4f6fa] pt-[3px]">
              {Array.from({ length: 11 }, (_, index) => (
                <span key={index} className="h-[2px] w-px bg-[#8d8d93]" />
              ))}
            </div>
          </div>
          <div className="h-[2px] bg-[#eef0f2]" />
        </div>
      </div>
      {children}
    </section>
  );
}

function Tooltip({ children, className }: { children: string; className: string }) {
  return (
    <div role="tooltip" className={`absolute flex h-[9px] items-center border border-[#c9c9c9] bg-white px-[2px] text-[#666] ${className}`}>
      {children}
    </div>
  );
}

function Arrow({ line, head }: { line: string; head: string }) {
  return (
    <svg className="pointer-events-none absolute inset-0 h-full w-full" aria-hidden="true">
      <path d={line} stroke="#1fe81f" strokeWidth="1.5" />
      <path d={head} fill="#1fe81f" />
    </svg>
  );
}

function SaveTemplate() {
  return (
    <div role="dialog" aria-label="Save Template" className="absolute top-[245px] left-[295px] w-[152px] border border-[#a3a3a3] bg-white">
      <div className="flex h-[13px] items-center px-[3px]">
        <Glyph name="app" className="mr-[3px] size-[7px]" />
        <h2 className="flex-1">Save Template</h2>
        <X className="size-[7px]" />
      </div>
      <div className="bg-[#d1d1d5] p-[3px]">
        <Box title="Template" className="pb-[2px]">
          <label className="block">
            <span className="block h-[8px]">Name</span>
            <input defaultValue="04" className="block h-[9px] w-full border-b border-[#5b5b8e] bg-[#e8e8f2] px-px" />
          </label>
        </Box>
      </div>
      <div className="flex h-[17px] items-center justify-end gap-[4px] pr-[4px]">
        <Button primary>OK</Button>
        <Button>Cancel</Button>
      </div>
    </div>
  );
}

const templates = [
  ['Layers', '01'],
  ['Beam Panel', '02'],
  ['Uniform', '03'],
  ['Uniform', '04'],
];

function LoadTemplate() {
  return (
    <div role="dialog" aria-label="Load Template" className="absolute top-[185px] left-[373px] w-[173px] border border-[#a3a3a3] bg-white">
      <div className="flex h-[13px] items-center px-[3px]">
        <Glyph name="app" className="mr-[3px] size-[7px]" />
        <h2 className="flex-1">Load Template</h2>
        <Minus className="mr-[14px] size-[5px] text-[#ccc]" />
        <Square className="mr-[13px] size-[6px]" strokeWidth={3} />
        <X className="mr-[3px] size-[7px]" strokeWidth={3} />
      </div>
      <div className="bg-[#d1d1d5] p-[3px]">
        <section className="flex min-h-[128px] flex-col bg-white px-px pt-[2px] pb-[2px]">
          <h3 className="h-[8px] px-px font-medium text-[#46567f]">List of Templates</h3>
          <table className="w-full table-fixed border-collapse text-left">
            <thead className="bg-[#efefef]">
              <tr>
                <th className="h-[3px] w-[51px] bg-[#d0d0d4] p-0" />
                <th className="h-[3px] bg-[#e9e9eb] p-0" />
              </tr>
              <tr className="h-[14px] text-center align-bottom">
                <th className="border-r border-[#dcdcdc] p-0 font-normal">Type</th>
                <th className="p-0 font-normal">Name</th>
              </tr>
            </thead>
            <tbody>
              {templates.map(([type, name], index) => (
                <tr key={name} className="border-b border-[#ececec] bg-[#fcfcf9] leading-[6px]">
                  <td className={`p-0 pl-px ${index === 3 ? 'bg-[#0a6cc9] text-white' : ''}`}>{type}</td>
                  <td className="p-0 pl-[3px]">{name}</td>
                </tr>
              ))}
            </tbody>
          </table>
          <IconButton name="delete" label="Delete template" className="mt-auto mr-[2px] self-end" />
        </section>
      </div>
      <div className="flex h-[18px] items-center justify-end gap-[4px] pr-[4px]">
        <Button primary>OK</Button>
        <Button>Cancel</Button>
      </div>
    </div>
  );
}

export default function App() {
  return (
    <main className="overflow-hidden bg-white font-['Lato','Noto_Sans',sans-serif] text-[5px] leading-[7px] text-[#111] whitespace-nowrap">
      <Screen>
        <Arrow line="M231 413 292 320" head="M294.500 316 293.500 323.500 288.500 320z" />
        <Tooltip className="top-[428px] left-[226px]">Save as Template</Tooltip>
        <SaveTemplate />
      </Screen>
      <div className="h-[17px] border-b border-[#a9cfdb] bg-[#b6dce8]" />
      <div className="pt-[2px]">
        <Screen>
          <Arrow line="M219 415 367 357.500" head="M372 355.500 364.500 355.500 366.500 361z" />
          <Tooltip className="top-[428px] left-[213px]">Load from Template</Tooltip>
          <LoadTemplate />
        </Screen>
      </div>
    </main>
  );
}
